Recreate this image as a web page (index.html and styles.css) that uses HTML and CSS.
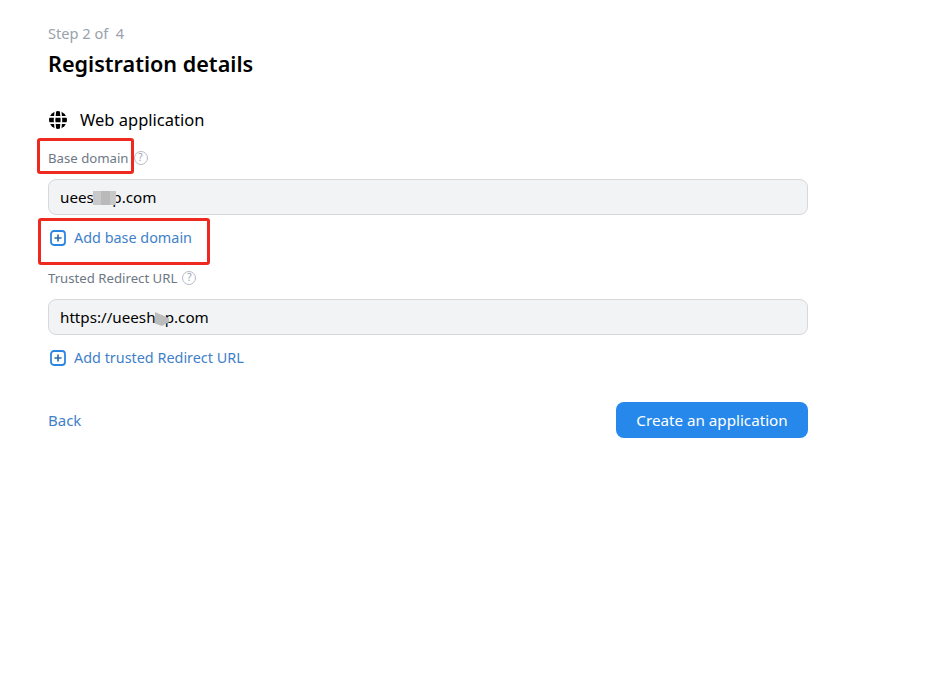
FILE: index.html
```html
<!DOCTYPE html>
<html lang="en">
<head>
<meta charset="utf-8">
<title>Registration details</title>
<link rel="stylesheet" href="styles.css">
</head>
<body>
<main class="page">
  <div class="step">Step 2 of&nbsp; 4</div>
  <h1 class="title">Registration details</h1>
  <div class="platform">
    <svg class="globe" width="20" height="20" viewBox="0 0 20 20" aria-hidden="true">
      <circle cx="10" cy="10" r="9" fill="#000"/>
      <path d="M0 6.9h20M0 13.1h20M7.4 0.5C6.4 6 6.4 14 7.4 19.5M12.6 0.5C13.6 6 13.6 14 12.6 19.5" stroke="#fff" stroke-width="1.6" fill="none"/>
    </svg>
    <span>Web application</span>
  </div>

  <div class="label-row first">
    <span class="label">Base domain</span>
    <span class="help">?</span>
    <span class="mark mark-label"></span>
  </div>
  <div class="field">
    <span>ueeshop.com</span>
    <span class="redact redact-a"></span>
  </div>
  <div class="add-row">
    <svg class="plus" width="16" height="16" viewBox="0 0 16 16" aria-hidden="true">
      <rect x="1" y="1" width="14" height="14" rx="3" fill="none" stroke="#2a86e0" stroke-width="1.8"/>
      <path d="M8 4.4v7.2M4.4 8h7.2" stroke="#2a6ea8" stroke-width="1.7"/>
    </svg>
    <a class="link">Add base domain</a>
    <span class="mark mark-add"></span>
  </div>

  <div class="label-row second">
    <span class="label">Trusted Redirect URL</span>
    <span class="help">?</span>
  </div>
  <div class="field">
    <span>https://ueeshop.com</span>
    <span class="redact redact-b"></span>
  </div>
  <div class="add-row">
    <svg class="plus" width="16" height="16" viewBox="0 0 16 16" aria-hidden="true">
      <rect x="1" y="1" width="14" height="14" rx="3" fill="none" stroke="#2a86e0" stroke-width="1.8"/>
      <path d="M8 4.4v7.2M4.4 8h7.2" stroke="#2a6ea8" stroke-width="1.7"/>
    </svg>
    <a class="link">Add trusted Redirect URL</a>
  </div>

  <div class="actions">
    <a class="link back">Back</a>
    <button class="primary" type="button">Create an application</button>
  </div>
</main>
</body>
</html>
```
FILE: styles.css
```css
* { box-sizing: border-box; }
html, body { margin: 0; padding: 0; background: #fff; }
body {
  font-family: "Noto Sans", sans-serif;
  color: #000;
  height: 696px;
  overflow: hidden;
}
.page {
  width: 760px;
  margin-left: 48px;
  padding-top: 24px;
  display: flex;
  flex-direction: column;
}
.step {
  font-size: 14.6px;
  line-height: 18px;
  color: #99a2ad;
}
.title {
  margin: 10px 0 0;
  font-size: 21.6px;
  line-height: 24px;
  font-weight: 600;
}
.platform {
  margin-top: 32px;
  display: flex;
  align-items: center;
  gap: 12px;
  font-size: 16.5px;
  line-height: 24px;
}
.globe { flex: none; }
.label-row {
  position: relative;
  height: 20px;
  display: flex;
  align-items: center;
  gap: 5px;
}
.label-row.first { margin-top: 16px; }
.label-row.second { margin-top: 20px; }
.label {
  font-size: 13.2px;
  line-height: 20px;
  color: #6d7885;
}
.help {
  width: 14px;
  height: 14px;
  border: 1.5px solid #b4bcc6;
  border-radius: 50%;
  color: #99a2ad;
  font-size: 10px;
  line-height: 11px;
  text-align: center;
}
.field {
  position: relative;
  margin-top: 11px;
  height: 36px;
  padding: 0 11px;
  display: flex;
  align-items: center;
  background: #f2f3f5;
  border: 1px solid #d7d8db;
  border-radius: 8px;
  font-size: 15.2px;
}
.redact {
  position: absolute;
  background: #bcbcbc;
}
.redact-a {
  left: 44px;
  top: 11px;
  width: 23px;
  height: 14px;
  background: linear-gradient(90deg, #c9c9cc 0 35%, #bababa 35% 75%, #c8c8c8 75%);
}
.redact-b {
  left: 106px;
  top: 12px;
  width: 14px;
  height: 14px;
  clip-path: polygon(0 0, 100% 45%, 100% 72%, 50% 100%, 0 82%);
}
.add-row {
  position: relative;
  margin-top: 13px;
  margin-left: 2px;
  height: 20px;
  display: flex;
  align-items: center;
  gap: 8px;
}
.plus { flex: none; }
.link {
  font-size: 14.4px;
  line-height: 20px;
  color: #3f7fc9;
}
.link.back { font-size: 15px; }
.actions {
  margin-top: 34px;
  display: flex;
  align-items: center;
  justify-content: space-between;
}
.primary {
  width: 192px;
  height: 36px;
  border: 0;
  border-radius: 8px;
  background: #2688eb;
  color: #fff;
  font-family: inherit;
  font-size: 15.2px;
}
.mark {
  position: absolute;
  border: 3px solid #ee2a20;
  border-radius: 3px;
}
.mark-label { left: -11px; top: -10px; width: 97px; height: 36px; }
.mark-add { left: -12px; top: -10px; width: 172px; height: 47px; }
```
